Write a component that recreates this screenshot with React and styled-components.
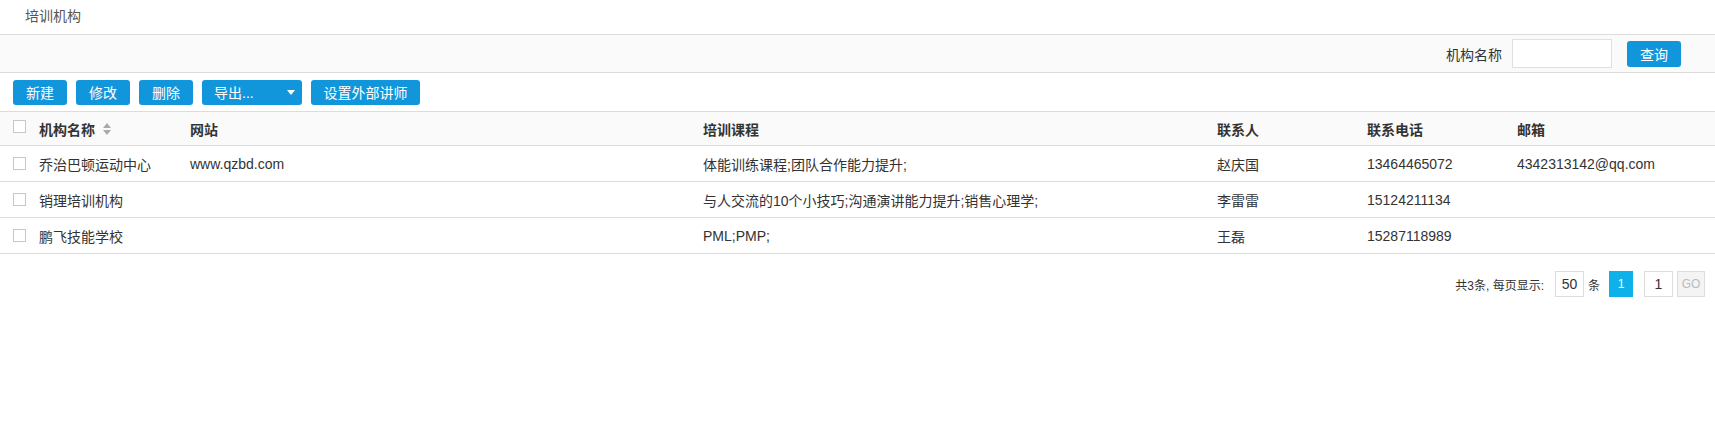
import React from "react";
import styled, { createGlobalStyle } from "styled-components";

const Global = createGlobalStyle`
  html, body { margin: 0; padding: 0; background: #fff; }
  body {
    font-family: "Liberation Sans", Arial, "Noto Sans CJK SC", sans-serif;
    color: #333;
  }
  * { box-sizing: border-box; }
`;

const COLS = "39px 151px 513px 514px 150px 150px 1fr";

const TitleBar = styled.div`
  height: 35px;
  padding-left: 25px;
  display: flex;
  align-items: center;
  padding-bottom: 4px;
  border-bottom: 1px solid #dcdcdc;
  font-size: 14px;
  color: #555;
`;

const SearchBar = styled.div`
  height: 38px;
  background: #fafafa;
  border-bottom: 1px solid #dcdcdc;
  display: flex;
  align-items: center;
  justify-content: flex-end;
  padding-right: 34px;
`;

const Label = styled.span`
  font-size: 14px;
  color: #333;
  margin-right: 10px;
`;

const TextInput = styled.input`
  width: 100px;
  height: 29px;
  border: 1px solid #e0e0e0;
  background: #fff;
  margin-right: 15px;
  outline: none;
`;

const Btn = styled.button`
  height: ${(p) => p.$h || 25}px;
  width: ${(p) => p.$w}px;
  border: none;
  border-radius: 3px;
  background: #1296db;
  color: #fff;
  font-family: inherit;
  font-size: 14px;
  display: flex;
  align-items: center;
  justify-content: ${(p) => (p.$split ? "space-between" : "center")};
  padding: ${(p) => (p.$split ? "0 7px 0 12px" : "0")};
  cursor: pointer;
`;

const Caret = styled.span`
  width: 0;
  height: 0;
  border-left: 4.5px solid transparent;
  border-right: 4.5px solid transparent;
  border-top: 5px solid #fff;
`;

const ActionBar = styled.div`
  height: 39px;
  border-bottom: 1px solid #dcdcdc;
  display: flex;
  align-items: center;
  gap: 9px;
  padding-left: 13px;
`;

const Row = styled.div`
  display: grid;
  grid-template-columns: ${COLS};
  height: ${(p) => (p.$head ? 34 : 36)}px;
  align-items: center;
  border-bottom: 1px solid #dcdcdc;
  background: ${(p) => (p.$head ? "#fafafa" : "#fff")};
  font-size: 14px;
  font-weight: ${(p) => (p.$head ? 700 : 400)};
  color: #333;
`;

const Cell = styled.div`
  display: flex;
  align-items: center;
  white-space: nowrap;
`;

const CheckCell = styled.div`
  display: flex;
  align-items: center;
  padding-left: 13px;
`;

const Check = styled.span`
  width: 13px;
  height: 13px;
  border: 1px solid #c8c8c8;
  background: #fff;
  display: block;
  margin-top: ${(p) => (p.$head ? -4 : 0)}px;
`;

const Sort = styled.svg`
  margin-left: 7px;
`;

const Pager = styled.div`
  display: flex;
  justify-content: flex-end;
  align-items: center;
  padding: 17px 10px 0 0;
  font-size: 12px;
  color: #333;
`;

const PagerText = styled.span`
  margin-right: ${(p) => p.$mr || 0}px;
  font-size: 12px;
`;

const PageBox = styled.div`
  width: ${(p) => p.$w}px;
  height: 26px;
  display: flex;
  align-items: center;
  justify-content: center;
  border: 1px solid ${(p) => (p.$active ? "#0fb1ea" : "#ddd")};
  background: ${(p) => (p.$active ? "#0fb1ea" : p.$muted ? "#f4f4f4" : "#fff")};
  color: ${(p) => (p.$active ? "#fff" : p.$muted ? "#bbb" : "#333")};
  font-size: ${(p) => p.$fs || 14}px;
  margin-right: ${(p) => p.$mr || 0}px;
`;

const rows = [
  ["乔治巴顿运动中心", "www.qzbd.com", "体能训练课程;团队合作能力提升;", "赵庆国", "13464465072", "4342313142@qq.com"],
  ["销理培训机构", "", "与人交流的10个小技巧;沟通演讲能力提升;销售心理学;", "李雷雷", "15124211134", ""],
  ["鹏飞技能学校", "", "PML;PMP;", "王磊", "15287118989", ""],
];

export default function App() {
  return (
    <>
      <Global />
      <TitleBar>培训机构</TitleBar>
      <SearchBar>
        <Label>机构名称</Label>
        <TextInput />
        <Btn $w={54} $h={26}>查询</Btn>
      </SearchBar>
      <ActionBar>
        <Btn $w={54}>新建</Btn>
        <Btn $w={54}>修改</Btn>
        <Btn $w={54}>删除</Btn>
        <Btn $w={100} $split>
          <span>导出...</span>
          <Caret />
        </Btn>
        <Btn $w={109}>设置外部讲师</Btn>
      </ActionBar>
      <Row $head>
        <CheckCell><Check $head /></CheckCell>
        <Cell>
          机构名称
          <Sort width="10" height="14" viewBox="0 0 10 14">
            <path d="M5 1 L9 6 L1 6 Z" fill="#aaa" />
            <path d="M5 13 L9 8 L1 8 Z" fill="#aaa" />
          </Sort>
        </Cell>
        <Cell>网站</Cell>
        <Cell>培训课程</Cell>
        <Cell>联系人</Cell>
        <Cell>联系电话</Cell>
        <Cell>邮箱</Cell>
      </Row>
      {rows.map((r, i) => (
        <Row key={i}>
          <CheckCell><Check /></CheckCell>
          {r.map((c, j) => (
            <Cell key={j}>{c}</Cell>
          ))}
        </Row>
      ))}
      <Pager>
        <PagerText $mr={11}>共3条, 每页显示:</PagerText>
        <PageBox $w={29} $mr={4}>50</PageBox>
        <PagerText $mr={9}>条</PagerText>
        <PageBox $w={24} $active $fs={12} $mr={11}>1</PageBox>
        <PageBox $w={29} $mr={4}>1</PageBox>
        <PageBox $w={28} $muted $fs={12}>GO</PageBox>
      </Pager>
    </>
  );
}
